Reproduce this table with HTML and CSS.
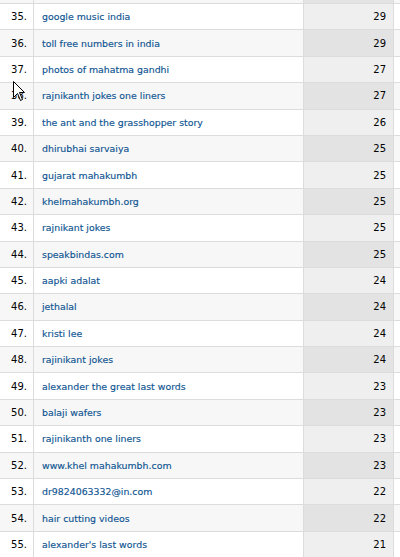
FILE: index.html
```html
<!DOCTYPE html>
<html>
<head>
<meta charset="utf-8">
<link rel="stylesheet" href="styles.css">
</head>
<body>
<div class="table">
  <div class="row stub alt"><div class="c num"></div><div class="c q"></div><div class="c val"></div><div class="c extra"></div></div>
  <div class="row"><div class="c num">35.</div><div class="c q"><a>google music india</a></div><div class="c val">29</div><div class="c extra"></div></div>
  <div class="row alt"><div class="c num">36.</div><div class="c q"><a>toll free numbers in india</a></div><div class="c val">29</div><div class="c extra"></div></div>
  <div class="row"><div class="c num">37.</div><div class="c q"><a>photos of mahatma gandhi</a></div><div class="c val">27</div><div class="c extra"></div></div>
  <div class="row alt"><div class="c num">38.</div><div class="c q"><a>rajnikanth jokes one liners</a></div><div class="c val">27</div><div class="c extra"></div></div>
  <div class="row"><div class="c num">39.</div><div class="c q"><a>the ant and the grasshopper story</a></div><div class="c val">26</div><div class="c extra"></div></div>
  <div class="row alt"><div class="c num">40.</div><div class="c q"><a>dhirubhai sarvaiya</a></div><div class="c val">25</div><div class="c extra"></div></div>
  <div class="row"><div class="c num">41.</div><div class="c q"><a>gujarat mahakumbh</a></div><div class="c val">25</div><div class="c extra"></div></div>
  <div class="row alt"><div class="c num">42.</div><div class="c q"><a>khelmahakumbh.org</a></div><div class="c val">25</div><div class="c extra"></div></div>
  <div class="row"><div class="c num">43.</div><div class="c q"><a>rajnikant jokes</a></div><div class="c val">25</div><div class="c extra"></div></div>
  <div class="row alt"><div class="c num">44.</div><div class="c q"><a>speakbindas.com</a></div><div class="c val">25</div><div class="c extra"></div></div>
  <div class="row"><div class="c num">45.</div><div class="c q"><a>aapki adalat</a></div><div class="c val">24</div><div class="c extra"></div></div>
  <div class="row alt"><div class="c num">46.</div><div class="c q"><a>jethalal</a></div><div class="c val">24</div><div class="c extra"></div></div>
  <div class="row"><div class="c num">47.</div><div class="c q"><a>kristi lee</a></div><div class="c val">24</div><div class="c extra"></div></div>
  <div class="row alt"><div class="c num">48.</div><div class="c q"><a>rajinikant jokes</a></div><div class="c val">24</div><div class="c extra"></div></div>
  <div class="row"><div class="c num">49.</div><div class="c q"><a>alexander the great last words</a></div><div class="c val">23</div><div class="c extra"></div></div>
  <div class="row alt"><div class="c num">50.</div><div class="c q"><a>balaji wafers</a></div><div class="c val">23</div><div class="c extra"></div></div>
  <div class="row"><div class="c num">51.</div><div class="c q"><a>rajinikanth one liners</a></div><div class="c val">23</div><div class="c extra"></div></div>
  <div class="row alt"><div class="c num">52.</div><div class="c q"><a>www.khel mahakumbh.com</a></div><div class="c val">23</div><div class="c extra"></div></div>
  <div class="row"><div class="c num">53.</div><div class="c q"><a>dr9824063332@in.com</a></div><div class="c val">22</div><div class="c extra"></div></div>
  <div class="row alt"><div class="c num">54.</div><div class="c q"><a>hair cutting videos</a></div><div class="c val">22</div><div class="c extra"></div></div>
  <div class="row"><div class="c num">55.</div><div class="c q"><a>alexander's last words</a></div><div class="c val">21</div><div class="c extra"></div></div>
  <svg class="cursor" width="13" height="21" viewBox="0 0 13 21">
    <path d="M0.5 0.5 L0.5 16.5 L4.5 12.5 L7.5 19.5 L9.5 18.5 L6.5 11.5 L11.5 11.5 Z" fill="#fff" stroke="#000" stroke-width="1"/>
  </svg>
</div>
</body>
</html>
```
FILE: styles.css
```css
html, body {
  margin: 0;
  padding: 0;
  background: #fff;
}
body {
  width: 400px;
  height: 557px;
  overflow: hidden;
  font-family: "DejaVu Sans", Verdana, sans-serif;
  font-size: 10px;
}
.table {
  position: relative;
  width: 410px;
}
.row {
  display: grid;
  grid-template-columns: 34px 270px 90px 1fr;
  height: 26.4px;
  box-sizing: border-box;
  border-bottom: 1px solid #dcdcdc;
  background: #fff;
}
.row.alt {
  background: #f7f7f7;
}
.row.stub {
  height: 4px;
}
.c {
  display: flex;
  align-items: center;
  border-right: 1px solid #dcdcdc;
  white-space: nowrap;
  overflow: hidden;
}
.num {
  justify-content: flex-end;
  padding-right: 6px;
  color: #000;
  font-size: 10px;
}
.q {
  padding-left: 8px;
  font-size: 9.4px;
}
.q a {
  color: #0f5592;
  text-decoration: none;
  -webkit-text-stroke: 0.15px #0f5592;
}
.val {
  justify-content: flex-end;
  padding-right: 7px;
  background: #efefef;
  color: #000;
  font-size: 10px;
}
.row.alt .val {
  background: #e3e3e3;
}
.extra {
  border-right: none;
}
.cursor {
  position: absolute;
  left: 13px;
  top: 81px;
}
```
